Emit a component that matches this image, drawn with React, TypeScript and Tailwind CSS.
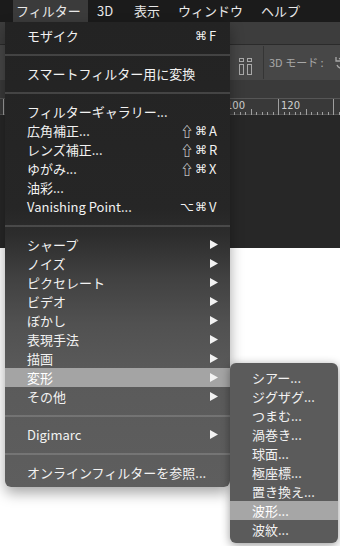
type Row =
  | { sep: true }
  | { label: string; mod?: string; cmd?: boolean; k?: string; sub?: boolean; active?: boolean };

const menu: Row[] = [
  { label: "モザイク", cmd: true, k: "F" },
  { sep: true },
  { label: "スマートフィルター用に変換" },
  { sep: true },
  { label: "フィルターギャラリー..." },
  { label: "広角補正...", mod: "⇧", cmd: true, k: "A" },
  { label: "レンズ補正...", mod: "⇧", cmd: true, k: "R" },
  { label: "ゆがみ...", mod: "⇧", cmd: true, k: "X" },
  { label: "油彩..." },
  { label: "Vanishing Point...", mod: "⌥", cmd: true, k: "V" },
  { sep: true },
  { label: "シャープ", sub: true },
  { label: "ノイズ", sub: true },
  { label: "ピクセレート", sub: true },
  { label: "ビデオ", sub: true },
  { label: "ぼかし", sub: true },
  { label: "表現手法", sub: true },
  { label: "描画", sub: true },
  { label: "変形", sub: true, active: true },
  { label: "その他", sub: true },
  { sep: true },
  { label: "Digimarc", sub: true },
  { sep: true },
  { label: "オンラインフィルターを参照..." },
];

const distort = ["シアー...", "ジグザグ...", "つまむ...", "渦巻き...", "球面...", "極座標...", "置き換え...", "波形...", "波紋..."];

function Arrow() {
  return (
    <svg width="8" height="9" viewBox="0 0 8 9" className="ml-[1px]">
      <polygon points="0,0 8,4.5 0,9" fill="#f2f2f2" />
    </svg>
  );
}

function Ruler() {
  const ticks = [];
  for (let i = -51; i < 12; i++) {
    const x = Math.round(278 + i * 5.5) + 0.5;
    const m = ((i % 10) + 10) % 10;
    const h = m === 0 ? 16 : m === 5 ? 6 : 3;
    ticks.push(<line key={i} x1={x} x2={x} y1={16 - h} y2={16} stroke="#a0a0a0" strokeWidth="1" />);
  }
  // only the labels that show to the right of the menu
  const labels = [];
  for (let k = -1; k <= 0; k++) {
    labels.push(
      <text key={k} x={278 + k * 55 + 3} y="10" fontSize="10" fill="#cfcfcf" fontFamily="DejaVu Sans, sans-serif">
        {120 + k * 20}
      </text>
    );
  }
  return (
    <svg width="340" height="16" viewBox="0 0 340 16" shapeRendering="crispEdges" className="block">
      {ticks}
      {labels}
    </svg>
  );
}

export default function App() {
  return (
    <div className="relative w-[340px] h-[546px] overflow-hidden flex flex-col bg-white font-[family-name:'Noto_Sans_CJK_JP','DejaVu_Sans',sans-serif]">
      {/* menu bar */}
      <div className="h-[22px] shrink-0 bg-[#1b1b1b] flex items-center pl-[13px] text-[13px] text-[#e8e8e8]">
        <div className="h-full w-[75px] pl-[3px] flex items-center bg-[#3b3b3b]">フィルター</div>
        <span className="ml-[9px] w-[37px]">3D</span>
        <span className="w-[44px]">表示</span>
        <span className="w-[83px]">ウィンドウ</span>
        <span>ヘルプ</span>
      </div>

      {/* app chrome behind the menu */}
      <div className="h-[23px] shrink-0 bg-[#3d3d3d] border-b border-[#2b2b2b]" />
      <div className="h-[35px] shrink-0 bg-[#474747] flex items-center pl-[238px]">
        <svg width="15" height="17" viewBox="0 0 15 17" className="mt-[8px] shrink-0">
          <rect x="1.5" y="0.5" width="4" height="3" fill="none" stroke="#a8a8a8" />
          <rect x="9.5" y="0.5" width="4" height="3" fill="none" stroke="#a8a8a8" />
          <rect x="1.5" y="6.5" width="4" height="10" fill="none" stroke="#a8a8a8" />
          <rect x="9.5" y="6.5" width="4" height="10" fill="none" stroke="#a8a8a8" />
        </svg>
        <div className="ml-[10px] w-px h-[33px] bg-[#353535] shrink-0" />
        <span className="ml-[5px] text-[11px] text-[#a8a8a8] whitespace-nowrap">3D モード :</span>
        <svg width="14" height="14" viewBox="0 0 14 14" className="ml-[10px] shrink-0">
          <path d="M3 9a5 5 0 1 0 2-6" fill="none" stroke="#a8a8a8" strokeWidth="1.3" />
          <path d="M2 1v4h4" fill="none" stroke="#a8a8a8" strokeWidth="1.3" />
        </svg>
      </div>
      <div className="h-[19px] shrink-0 bg-[#3a3a3a] border-b border-[#565656]" />
      <div className="h-[16px] shrink-0 bg-[#393939] border-b border-[#525252]">
        <Ruler />
      </div>
      <div className="h-[133px] shrink-0 bg-[#272727]" />
      <div className="flex-1 bg-white" />

      {/* フィルター menu */}
      <div className="absolute left-[5px] top-[22px] w-[225px] pt-[4px] pb-[5px] rounded-b-[6px] shadow-[0_6px_14px_rgba(0,0,0,0.35)] bg-[linear-gradient(180deg,#232323_0%,#262626_40%,#2d2d2d_46%,#414141_55%,#515151_65%,#5a5a5a_75%,#5e5e5e_100%)] text-[13px] text-[#f2f2f2]">
        {menu.map((r, i) =>
          "sep" in r ? (
            <div key={i} className="h-[19px] flex items-center">
              <div className="h-[2px] w-full bg-white/15" />
            </div>
          ) : (
            <div
              key={i}
              className={`h-[19px] flex items-center pl-[22px] pr-[11px] whitespace-nowrap ${r.active ? "bg-[#a4a4a4] text-white" : ""}`}
            >
              <span>{r.label}</span>
              {(r.k || r.sub) && (
                <div className="ml-auto flex items-center">
                  {r.mod === "⌥" ? (
                    <span className="w-[14px] text-center font-['DejaVu_Sans',sans-serif] text-[12px]">⌥</span>
                  ) : (
                    <span className="w-[14px] text-center text-[13px]">{r.mod}</span>
                  )}
                  <span className="w-[14px] text-center font-['DejaVu_Sans',sans-serif] text-[12px]">{r.cmd ? "⌘" : ""}</span>
                  <span className="w-[11px] pl-[1px] flex items-center">{r.sub ? <Arrow /> : r.k}</span>
                </div>
              )}
            </div>
          )
        )}
      </div>

      {/* 変形 submenu */}
      <div className="absolute left-[230px] top-[363px] w-[108px] pt-[5px] pb-[4px] rounded-[6px] bg-[#5b5b5b] shadow-[0_2px_10px_rgba(0,0,0,0.4)] text-[13px] text-[#f2f2f2]">
        {distort.map((t) => (
          <div key={t} className={`h-[19px] flex items-center pl-[22px] whitespace-nowrap ${t === "波形..." ? "bg-[#a6a6a6] text-white" : ""}`}>
            {t}
          </div>
        ))}
      </div>
    </div>
  );
}
